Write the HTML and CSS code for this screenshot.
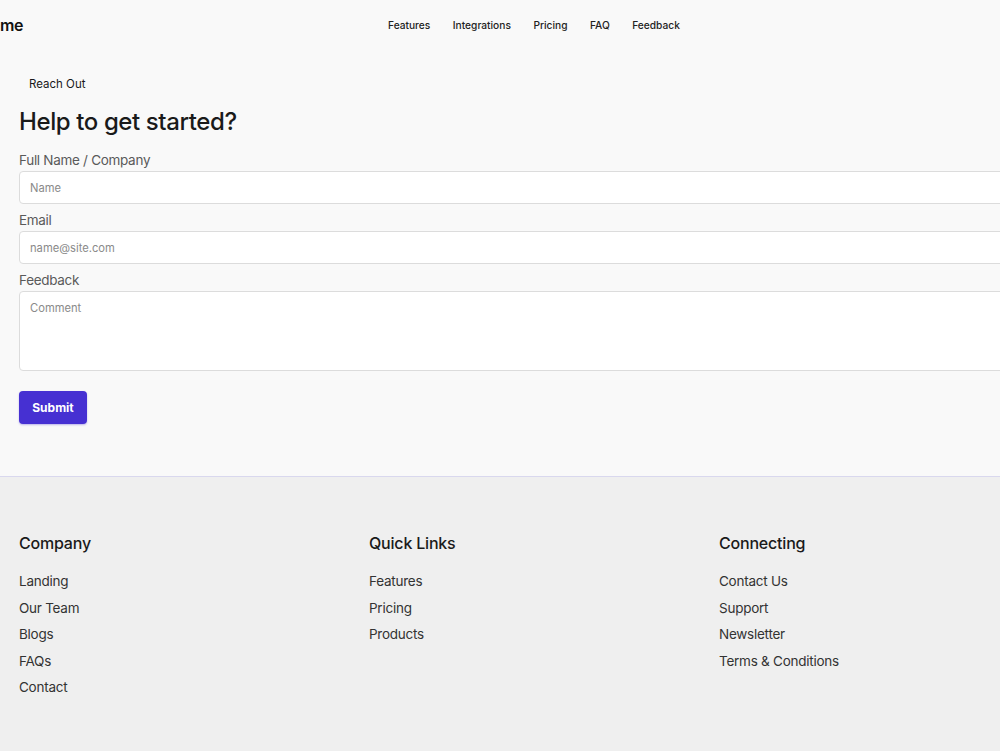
FILE: index.html
```html
<!DOCTYPE html>
<html lang="en">
<head>
<meta charset="utf-8">
<title>Reach Out</title>
<link rel="stylesheet" href="styles.css">
</head>
<body>
<div class="page">
  <header class="topbar">
    <div class="logo">me</div>
    <nav class="nav">
      <a href="#">Features</a>
      <a href="#">Integrations</a>
      <a href="#">Pricing</a>
      <a href="#">FAQ</a>
      <a href="#">Feedback</a>
    </nav>
  </header>

  <main class="contact">
    <div class="eyebrow">Reach Out</div>
    <h1 class="title">Help to get started?</h1>
    <form class="form">
      <label class="label" for="name">Full Name / Company</label>
      <input class="field" id="name" type="text" placeholder="Name">
      <label class="label" for="email">Email</label>
      <input class="field" id="email" type="email" placeholder="name@site.com">
      <label class="label" for="comment">Feedback</label>
      <textarea class="field area" id="comment" placeholder="Comment"></textarea>
      <div class="actions"><button type="button" class="submit">Submit</button></div>
    </form>
  </main>

  <footer class="footer">
    <div class="cols">
      <div class="col">
        <h3 class="col-title">Company</h3>
        <ul class="links">
          <li>Landing</li>
          <li>Our Team</li>
          <li>Blogs</li>
          <li>FAQs</li>
          <li>Contact</li>
        </ul>
      </div>
      <div class="col">
        <h3 class="col-title">Quick Links</h3>
        <ul class="links">
          <li>Features</li>
          <li>Pricing</li>
          <li>Products</li>
        </ul>
      </div>
      <div class="col">
        <h3 class="col-title">Connecting</h3>
        <ul class="links">
          <li>Contact Us</li>
          <li>Support</li>
          <li>Newsletter</li>
          <li>Terms &amp; Conditions</li>
        </ul>
      </div>
    </div>
  </footer>
</div>
</body>
</html>
```

FILE: styles.css
```css
html, body {
  margin: 0;
  padding: 0;
  overflow: hidden;
  height: 751px;
}
body {
  background: #f9f9f9;
  font-family: Inter, "Liberation Sans", Arial, sans-serif;
  color: #1c1c1c;
}
.page {
  width: 1100px;
}
.topbar {
  height: 50px;
  display: flex;
  align-items: center;
}
.logo {
  font-size: 16px;
  font-weight: 600;
  letter-spacing: -0.3px;
  width: 388px;
  color: #111;
}
.nav {
  display: flex;
  gap: 22.5px;
}
.nav a {
  font-size: 10.2px;
  font-weight: 500;
  color: #222;
  text-decoration: none;
}
.contact {
  padding: 26px 0 0 19px;
  height: 427px;
  box-sizing: border-box;
  border-bottom: 1px solid #d9d8ee;
}
.eyebrow {
  font-size: 11.5px;
  line-height: 16px;
  padding-left: 10px;
  color: #1a1a1a;
}
.title {
  margin: 14px 0 12px;
  font-size: 24px;
  line-height: 32px;
  font-weight: 500;
  letter-spacing: -0.4px;
  color: #1a1a1a;
}
.form {
  display: flex;
  flex-direction: column;
}
.label {
  font-size: 13.5px;
  line-height: 20px;
  letter-spacing: -0.3px;
  color: #5a5a5a;
  margin-bottom: 1px;
}
.field {
  box-sizing: border-box;
  height: 33px;
  border: 1px solid #dcdcdc;
  border-radius: 4px;
  background: #fff;
  padding: 0 10px;
  font-family: inherit;
  font-size: 11.2px;
  color: #333;
  margin-bottom: 6px;
  width: 100%;
}
.field::placeholder {
  color: #8a8a8a;
}
.area {
  height: 80px;
  padding-top: 9px;
  resize: none;
  line-height: 14px;
}
.actions {
  margin-top: 14px;
}
.submit {
  width: 68px;
  height: 33px;
  border: none;
  border-radius: 4px;
  background: #4630d2;
  color: #fff;
  font-family: inherit;
  font-size: 12px;
  font-weight: 700;
  box-shadow: 0 1px 2px rgba(70, 48, 210, 0.35);
  cursor: pointer;
}
.footer {
  background: #efefef;
  height: 274px;
  padding: 54px 0 0 19px;
  box-sizing: border-box;
}
.cols {
  display: grid;
  grid-template-columns: 350px 350px 350px;
}
.col-title {
  margin: 0 0 13px;
  font-size: 16px;
  line-height: 24px;
  font-weight: 500;
  letter-spacing: -0.2px;
  color: #1a1a1a;
}
.links {
  list-style: none;
  margin: 0;
  padding: 0;
}
.links li {
  font-size: 13.5px;
  line-height: 26.5px;
  letter-spacing: -0.25px;
  color: #333;
}
```
